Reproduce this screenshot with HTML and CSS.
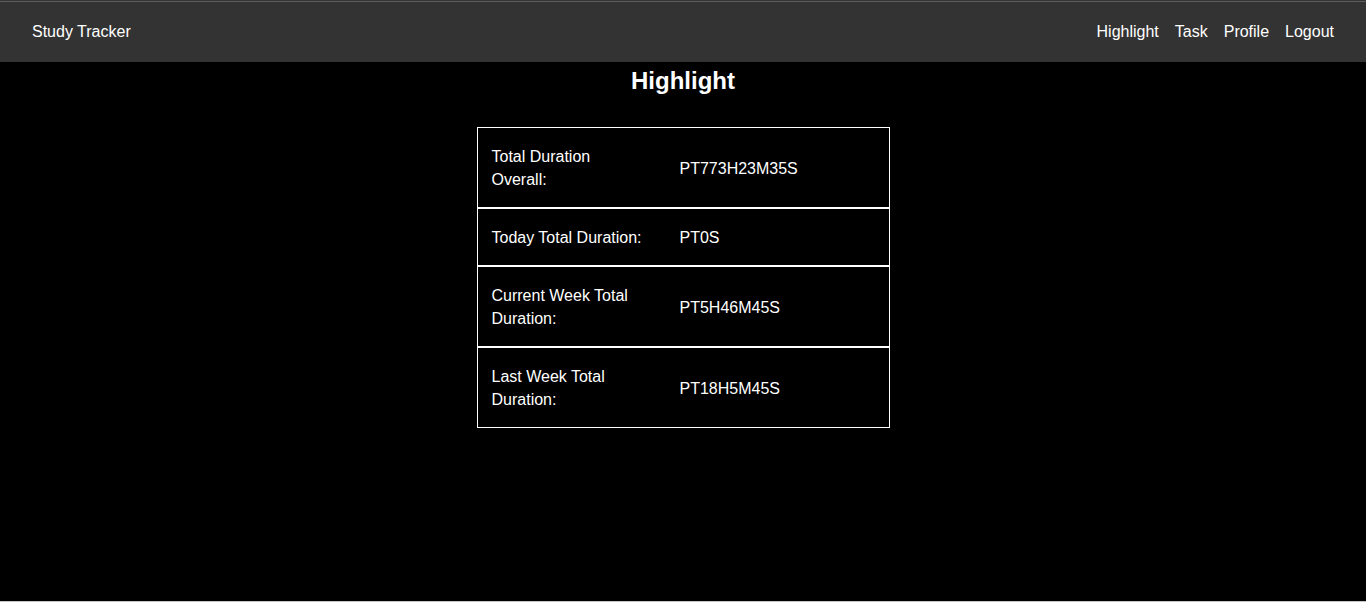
FILE: index.html
```html
<!DOCTYPE html>
<html lang="en">
<head>
<meta charset="utf-8">
<title>Study Tracker</title>
<link rel="stylesheet" href="styles.css">
</head>
<body>
<nav class="navbar">
  <a class="brand" href="#">Study Tracker</a>
  <div class="links">
    <a href="#">Highlight</a>
    <a href="#">Task</a>
    <a href="#">Profile</a>
    <a href="#">Logout</a>
  </div>
</nav>
<main class="content">
  <h2 class="title">Highlight</h2>
  <div class="stats">
    <div class="row"><div class="label">Total Duration Overall:</div><div class="value">PT773H23M35S</div></div>
    <div class="row"><div class="label">Today Total Duration:</div><div class="value">PT0S</div></div>
    <div class="row"><div class="label">Current Week Total Duration:</div><div class="value">PT5H46M45S</div></div>
    <div class="row"><div class="label">Last Week Total Duration:</div><div class="value">PT18H5M45S</div></div>
  </div>
</main>
</body>
</html>
```
FILE: styles.css
```css
* { box-sizing: border-box; }
html, body { margin: 0; padding: 0; }
body {
  background: #000;
  color: #fff;
  font-family: "Liberation Sans", Arial, sans-serif;
  font-size: 16px;
  min-height: 100vh;
  border-bottom: 1px solid #c4c4c4;
}
.navbar {
  height: 62px;
  background: #333333;
  box-shadow: inset 0 1px #333333, inset 0 2px #5e5e5e;
  display: flex;
  align-items: center;
  justify-content: space-between;
  padding: 2px 32px 0;
}
.navbar a {
  color: #fff;
  text-decoration: none;
}
.links {
  display: flex;
  gap: 16px;
}
.content {
  display: flex;
  flex-direction: column;
  align-items: center;
}
.title {
  margin: 5px 0 32px;
  font-size: 24px;
  font-weight: bold;
  line-height: 28px;
}
.stats {
  width: 413px;
}
.row {
  display: flex;
  align-items: center;
  border: 1px solid #fff;
  line-height: 23px;
  padding: 17px 0 16px;
}
.label {
  width: 188px;
  padding: 0 18px 0 14px;
}
.value {
  padding-left: 14px;
}
```
